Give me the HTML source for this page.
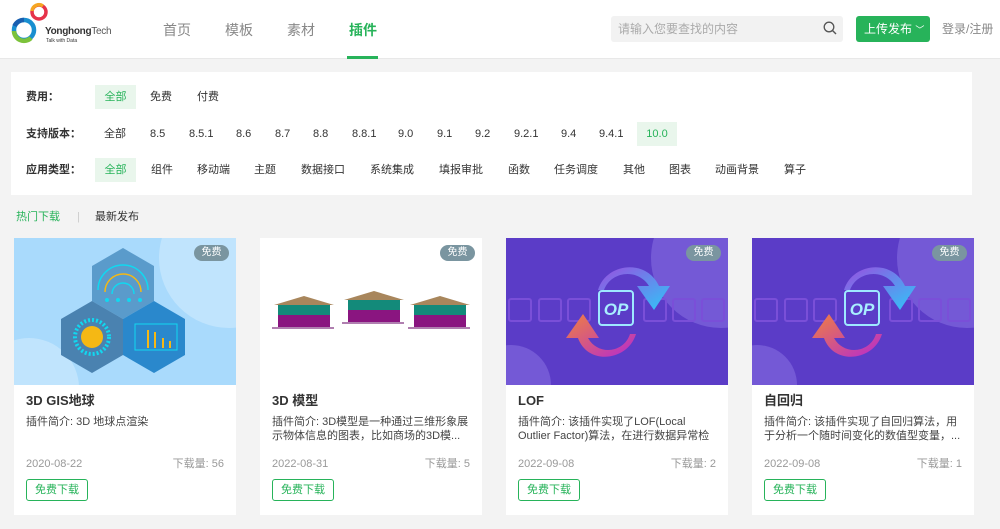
<!DOCTYPE html>
<html><head><meta charset="utf-8">
<style>
*{margin:0;padding:0;box-sizing:border-box}
body{width:1000px;height:529px;background:#f3f3f3;font-family:"Liberation Sans","Noto Sans CJK SC",sans-serif;position:relative;overflow:hidden;color:#333}
.a{position:absolute;white-space:nowrap;line-height:16px}
.hdr{position:absolute;left:0;top:0;width:1000px;height:59px;background:#fff;border-bottom:1px solid #e8e8e8}
.nav{font-size:14px;color:#888;top:22px;line-height:16px}
.panel{position:absolute;left:11px;top:72px;width:961px;height:123px;background:#fff}
.f{font-size:11px;color:#333}
.lbl{font-size:11px;font-weight:bold;color:#333}
.sel{background:#e9f6ec;color:#27b35a;text-align:center;height:24px;line-height:24px}
.card{position:absolute;top:238px;width:222px;height:277px;background:#fff}
.card .img{position:absolute;left:0;top:0;width:222px;height:147px;overflow:hidden}
.card h3{position:absolute;left:12px;top:155px;font-size:13px;line-height:16px;font-weight:bold;color:#333}
.card .d{position:absolute;left:12px;top:177px;width:200px;font-size:11px;line-height:14px;color:#444;height:28px;overflow:hidden}
.card .dt{position:absolute;left:12px;top:219px;font-size:11px;line-height:14px;color:#999}
.card .dl{position:absolute;right:12px;top:219px;font-size:11px;line-height:14px;color:#999}
.card .btn{position:absolute;left:12px;top:241px;height:22px;border:1px solid #27b35a;border-radius:3px;color:#27b35a;font-size:11px;line-height:20px;padding:0 8px}
.tag{position:absolute;right:7px;top:7px;width:35px;height:16px;border-radius:8px;background:#7a95a0;color:#fff;font-size:10px;text-align:center;line-height:16px}
</style></head><body>
<div class="hdr"></div>
<svg class="a" style="left:0;top:0" width="60" height="50" viewBox="0 0 60 50">
<circle cx="24" cy="30" r="10" fill="none" stroke="#1a8fd0" stroke-width="4.5"/>
<path d="M14 31 A10 10 0 0 0 31 38" fill="none" stroke="#7cc23b" stroke-width="4.5"/>
<path d="M14.5 26 A10 10 0 0 1 24 20" fill="none" stroke="#1a5fb0" stroke-width="4.5"/>
<circle cx="39" cy="12" r="7" fill="none" stroke="#e6334a" stroke-width="3.5"/>
<path d="M32 11 A7 7 0 0 1 43 6" fill="none" stroke="#f5a623" stroke-width="3.5"/>
</svg>
<div class="a" style="left:45px;top:24px;font-size:10px;font-weight:bold;color:#333;letter-spacing:-0.3px">Yonghong<span style="font-weight:normal;color:#555">Tech</span></div>
<div class="a" style="left:46px;top:38px;font-size:5px;line-height:6px;color:#333">Talk with Data</div>
<div class="a nav" style="left:163px">首页</div>
<div class="a nav" style="left:225px">模板</div>
<div class="a nav" style="left:287px">素材</div>
<div class="a nav" style="left:349px;color:#27b35a;font-weight:bold">插件</div>
<div class="a" style="left:347px;top:56px;width:31px;height:3px;background:#27b35a"></div>
<div class="a" style="left:611px;top:16px;width:232px;height:26px;background:#f2f2f2;border-radius:3px"></div>
<div class="a" style="left:618px;top:21px;font-size:12px;color:#aaa">请输入您要查找的内容</div>
<svg class="a" style="left:823px;top:21px" width="14" height="14"><circle cx="6" cy="6" r="4.8" fill="none" stroke="#555" stroke-width="1.3"/><path d="M9.5 9.5L13 13" stroke="#555" stroke-width="1.4"/></svg>
<div class="a" style="left:856px;top:16px;width:74px;height:26px;background:#27b35a;border-radius:3px;color:#fff;font-size:12px;line-height:26px;padding-left:8px">上传发布 <span style="font-size:9px">﹀</span></div>
<div class="a" style="left:942px;top:21px;font-size:12px;color:#888">登录/注册</div>

<div class="panel"></div>
<div class="a lbl" style="left:26px;top:89px">费用：</div>
<div class="a f sel" style="left:95px;top:85px;width:41px">全部</div>
<div class="a f" style="left:150px;top:89px">免费</div>
<div class="a f" style="left:197px;top:89px">付费</div>
<div class="a lbl" style="left:26px;top:126px">支持版本：</div>
<div class="a f" style="left:104px;top:126px">全部</div>
<div class="a f" style="left:150px;top:126px">8.5</div>
<div class="a f" style="left:189px;top:126px">8.5.1</div>
<div class="a f" style="left:236px;top:126px">8.6</div>
<div class="a f" style="left:275px;top:126px">8.7</div>
<div class="a f" style="left:313px;top:126px">8.8</div>
<div class="a f" style="left:352px;top:126px">8.8.1</div>
<div class="a f" style="left:398px;top:126px">9.0</div>
<div class="a f" style="left:437px;top:126px">9.1</div>
<div class="a f" style="left:475px;top:126px">9.2</div>
<div class="a f" style="left:514px;top:126px">9.2.1</div>
<div class="a f" style="left:561px;top:126px">9.4</div>
<div class="a f" style="left:599px;top:126px">9.4.1</div>
<div class="a f sel" style="left:637px;top:122px;width:40px">10.0</div>
<div class="a lbl" style="left:26px;top:162px">应用类型：</div>
<div class="a f sel" style="left:95px;top:158px;width:41px">全部</div>
<div class="a f" style="left:151px;top:162px">组件</div>
<div class="a f" style="left:197px;top:162px">移动端</div>
<div class="a f" style="left:254px;top:162px">主题</div>
<div class="a f" style="left:301px;top:162px">数据接口</div>
<div class="a f" style="left:370px;top:162px">系统集成</div>
<div class="a f" style="left:439px;top:162px">填报审批</div>
<div class="a f" style="left:508px;top:162px">函数</div>
<div class="a f" style="left:554px;top:162px">任务调度</div>
<div class="a f" style="left:623px;top:162px">其他</div>
<div class="a f" style="left:669px;top:162px">图表</div>
<div class="a f" style="left:715px;top:162px">动画背景</div>
<div class="a f" style="left:784px;top:162px">算子</div>

<div class="a" style="left:16px;top:209px;font-size:11px;color:#27b35a">热门下载</div>
<div class="a" style="left:77px;top:209px;font-size:11px;color:#ccc">|</div>
<div class="a" style="left:95px;top:209px;font-size:11px;color:#333">最新发布</div>

<div class="card" style="left:14px">
<div class="img"><svg width="222" height="147" viewBox="0 0 222 147">
<rect width="222" height="147" fill="#a9dafc"/>
<circle cx="215" cy="20" r="70" fill="#c0e4fd"/>
<circle cx="15" cy="150" r="50" fill="#c0e4fd"/>
<polygon points="109,10 140,28 140,63 109,81 78,63 78,28" fill="#5a9bcb"/>
<polygon points="78,63 109,81 109,117 78,135 47,117 47,81" fill="#4a82b0"/>
<polygon points="140,63 171,81 171,117 140,135 109,117 109,81" fill="#2a88cc"/>
<path d="M84 52 A25 25 0 0 1 134 52" fill="none" stroke="#11d8f0" stroke-width="1.5"/>
<path d="M91 54 A18 18 0 0 1 127 54" fill="none" stroke="#f5b814" stroke-width="1.5"/>
<path d="M98 56 A11 11 0 0 1 120 56" fill="none" stroke="#11d8f0" stroke-width="1.5"/>
<circle cx="93" cy="62" r="2" fill="#11d8f0"/><circle cx="104" cy="62" r="2" fill="#11d8f0"/><circle cx="115" cy="62" r="2" fill="#11d8f0"/><circle cx="126" cy="62" r="2" fill="#11d8f0"/>
<circle cx="78" cy="99" r="17" fill="none" stroke="#11d8f0" stroke-width="4" stroke-dasharray="2 2"/>
<circle cx="78" cy="99" r="11" fill="#f5b814"/>
<rect x="121" y="86" width="42" height="26" fill="none" stroke="#11d8f0"/>
<rect x="133" y="92" width="2" height="18" fill="#f5b814"/><rect x="140" y="94" width="2" height="16" fill="#f5b814"/><rect x="148" y="100" width="2" height="10" fill="#f5b814"/><rect x="155" y="103" width="2" height="7" fill="#f5b814"/>
</svg><div class="tag">免费</div></div>
<h3>3D GIS地球</h3><div class="d">插件简介: 3D 地球点渲染</div>
<div class="dt">2020-08-22</div><div class="dl">下载量: 56</div><div class="btn">免费下载</div></div>

<div class="card" style="left:260px">
<div class="img"><svg width="222" height="147" viewBox="0 0 222 147">
<rect width="222" height="147" fill="#fff"/>
<g id="h"><polygon points="14,67 44,58 74,67" fill="#a8865c"/><rect x="18" y="67" width="52" height="10" fill="#138a7a"/><rect x="18" y="77" width="52" height="12" fill="#8a1580"/><rect x="12" y="89" width="62" height="2" fill="#b07fb0"/></g>
<use href="#h" x="70" y="-5"/><use href="#h" x="136"/>
</svg><div class="tag">免费</div></div>
<h3>3D 模型</h3><div class="d">插件简介: 3D模型是一种通过三维形象展示物体信息的图表，比如商场的3D模...</div>
<div class="dt">2022-08-31</div><div class="dl">下载量: 5</div><div class="btn">免费下载</div></div>

<div class="card" style="left:506px">
<div class="img"><svg width="222" height="147" viewBox="0 0 222 147">
<defs><linearGradient id="g1" x1="0" y1="0" x2="1" y2="1"><stop offset="0" stop-color="#9a4de0"/><stop offset="1" stop-color="#2fc6f8"/></linearGradient>
<linearGradient id="g2" x1="0" y1="0" x2="1" y2="1"><stop offset="0" stop-color="#f08040"/><stop offset="1" stop-color="#b52ad0"/></linearGradient></defs>
<rect width="222" height="147" fill="#5b3cc7"/>
<circle cx="215" cy="20" r="70" fill="#7459d6"/>
<circle cx="5" cy="147" r="40" fill="#7459d6"/>
<g fill="none" stroke="#7a4fd8" stroke-width="2"><rect x="3" y="61" width="22" height="22" rx="2"/><rect x="33" y="61" width="22" height="22" rx="2"/><rect x="62" y="61" width="22" height="22" rx="2"/><rect x="138" y="61" width="22" height="22" rx="2"/><rect x="167" y="61" width="22" height="22" rx="2"/><rect x="196" y="61" width="22" height="22" rx="2"/></g>
<path d="M92 52 C100 25 140 20 153 48 L164 48 L148 72 L131 48 L143 48 C132 30 105 33 98 52Z" fill="url(#g1)"/>
<path d="M130 96 C122 123 82 128 72 100 L60 100 L77 76 L93 100 L82 100 C92 118 118 115 124 96Z" fill="url(#g2)"/>
<rect x="93" y="53" width="34" height="34" rx="3" fill="#5b3cc7" stroke="#9ee8ff" stroke-width="2"/>
<text x="110" y="77" text-anchor="middle" font-family="Liberation Sans" font-weight="bold" font-style="italic" font-size="17" fill="#a8eeff">OP</text>
</svg><div class="tag">免费</div></div>
<h3>LOF</h3><div class="d">插件简介: 该插件实现了LOF(Local Outlier Factor)算法，在进行数据异常检测时...</div>
<div class="dt">2022-09-08</div><div class="dl">下载量: 2</div><div class="btn">免费下载</div></div>

<div class="card" style="left:752px">
<div class="img"><svg width="222" height="147" viewBox="0 0 222 147">
<rect width="222" height="147" fill="#5b3cc7"/>
<circle cx="215" cy="20" r="70" fill="#7459d6"/>
<circle cx="5" cy="147" r="40" fill="#7459d6"/>
<g fill="none" stroke="#7a4fd8" stroke-width="2"><rect x="3" y="61" width="22" height="22" rx="2"/><rect x="33" y="61" width="22" height="22" rx="2"/><rect x="62" y="61" width="22" height="22" rx="2"/><rect x="138" y="61" width="22" height="22" rx="2"/><rect x="167" y="61" width="22" height="22" rx="2"/><rect x="196" y="61" width="22" height="22" rx="2"/></g>
<path d="M92 52 C100 25 140 20 153 48 L164 48 L148 72 L131 48 L143 48 C132 30 105 33 98 52Z" fill="url(#g1)"/>
<path d="M130 96 C122 123 82 128 72 100 L60 100 L77 76 L93 100 L82 100 C92 118 118 115 124 96Z" fill="url(#g2)"/>
<rect x="93" y="53" width="34" height="34" rx="3" fill="#5b3cc7" stroke="#9ee8ff" stroke-width="2"/>
<text x="110" y="77" text-anchor="middle" font-family="Liberation Sans" font-weight="bold" font-style="italic" font-size="17" fill="#a8eeff">OP</text>
</svg><div class="tag">免费</div></div>
<h3>自回归</h3><div class="d">插件简介: 该插件实现了自回归算法，用于分析一个随时间变化的数值型变量，...</div>
<div class="dt">2022-09-08</div><div class="dl">下载量: 1</div><div class="btn">免费下载</div></div>
</body></html>
